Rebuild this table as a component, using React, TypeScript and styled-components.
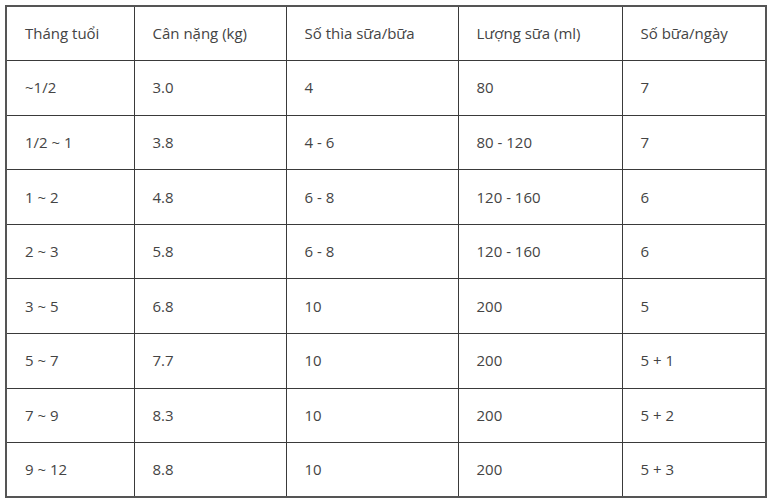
import { createGlobalStyle } from "styled-components";
import styled from "styled-components";

const GlobalStyle = createGlobalStyle`
  html, body {
    margin: 0;
    padding: 0;
    background: #ffffff;
  }
  body {
    font-family: "Open Sans", "Noto Sans", sans-serif;
  }
`;

const columns = [
  { label: "Tháng tuổi", width: 128 },
  { label: "Cân nặng (kg)", width: 152 },
  { label: "Số thìa sữa/bữa", width: 172 },
  { label: "Lượng sữa (ml)", width: 164 },
  { label: "Số bữa/ngày", width: 144 },
];

const rows = [
  ["~1/2", "3.0", "4", "80", "7"],
  ["1/2 ~ 1", "3.8", "4 - 6", "80 - 120", "7"],
  ["1 ~ 2", "4.8", "6 - 8", "120 - 160", "6"],
  ["2 ~ 3", "5.8", "6 - 8", "120 - 160", "6"],
  ["3 ~ 5", "6.8", "10", "200", "5"],
  ["5 ~ 7", "7.7", "10", "200", "5 + 1"],
  ["7 ~ 9", "8.3", "10", "200", "5 + 2"],
  ["9 ~ 12", "8.8", "10", "200", "5 + 3"],
];

export default function App() {
  return (
    <>
      <GlobalStyle />
      <Wrapper>
        <Table>
          <colgroup>
            {columns.map((c) => (
              <col key={c.label} style={{ width: c.width }} />
            ))}
          </colgroup>
          <tbody>
            <Row>
              {columns.map((c) => (
                <Cell key={c.label}>{c.label}</Cell>
              ))}
            </Row>
            {rows.map((r, i) => (
              <Row key={i}>
                {r.map((v, j) => (
                  <Cell key={j}>{v}</Cell>
                ))}
              </Row>
            ))}
          </tbody>
        </Table>
      </Wrapper>
    </>
  );
}

const Wrapper = styled.div`
  padding: 5px 5px 0 5px;
`;

const Table = styled.table`
  width: 760px;
  table-layout: fixed;
  border-collapse: collapse;
  border: 2px solid #555555;
`;

const Row = styled.tr`
  height: 54.6px;
`;

const Cell = styled.td`
  border: 1px solid #3a3a3a;
  padding: 0 0 1px 18px;
  font-size: 15px;
  color: #444444;
  vertical-align: middle;
  white-space: nowrap;
`;
